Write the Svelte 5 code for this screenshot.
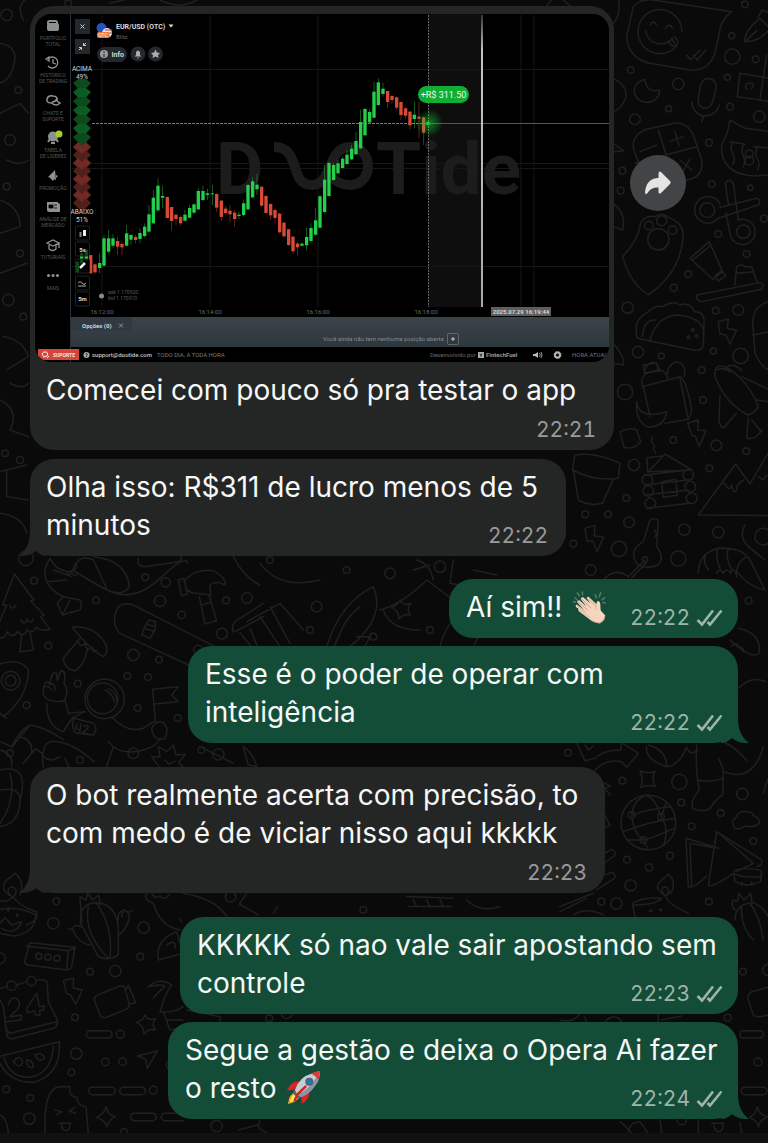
<script>
  const thread = [
    { lines: [['Olha isso: R$311 de lucro menos de 5'], ['minutos']], time: '22:22', width: 536, tail: true, gap: 9 },
    { lines: [['Aí sim!! ', 'clap']], time: '22:22', width: 289, mine: true, gap: 23 },
    { lines: [['Esse é o poder de operar com'], ['inteligência']], time: '22:22', width: 550, mine: true, tail: true, gap: 8 },
    { lines: [['O bot realmente acerta com precisão, to'], ['com medo é de viciar nisso aqui kkkkk']], time: '22:23', width: 575, tail: true, below: true, gap: 24 },
    { lines: [['KKKKK só nao vale sair apostando sem'], ['controle']], time: '22:23', width: 558, mine: true, gap: 24 },
    { lines: [['Segue a gestão e deixa o Opera Ai fazer'], ['o resto ', 'rocket']], time: '22:24', width: 570, mine: true, tail: true, gap: 8 }
  ];

  // candles: x, open/close top, open/close bottom, high, low, up
  const series = [
    {
      origin: 'translate(25 185) scale(.3333)',
      candles: [
        [157, 230, 262, 228, 265, 1], [170, 205, 235, 200, 240, 1], [184, 195, 225, 190, 230, 1], [197, 210, 265, 210, 266, 0],
        [210, 238, 262, 236, 266, 0], [224, 234, 249, 205, 265, 1], [237, 160, 242, 150, 245, 1], [251, 160, 200, 135, 205, 1],
        [264, 160, 182, 148, 190, 1], [278, 168, 185, 155, 210, 0], [291, 177, 187, 170, 210, 0], [305, 145, 182, 120, 185, 1],
        [318, 150, 164, 148, 180, 1], [332, 156, 165, 150, 175, 0], [345, 144, 162, 130, 175, 1], [359, 125, 153, 115, 158, 1],
        [372, 88, 140, 60, 142, 1], [385, 38, 115, 15, 118, 1], [399, 2, 76, -20, 80, 1], [413, 33, 38, 2, 70, 1],
        [427, 36, 99, 34, 100, 0], [440, 66, 108, 66, 138, 0], [453, 89, 102, 88, 120, 0], [467, 96, 115, 92, 122, 0],
        [480, 89, 107, 75, 110, 1], [494, 69, 98, 60, 100, 1], [507, 58, 83, 55, 88, 1], [520, 18, 73, 10, 75, 1],
        [534, 18, 45, 2, 48, 1], [547, 25, 30, 10, 45, 1]
      ]
    },
    {
      origin: 'translate(210 60) scale(.3333)',
      candles: [
        [7, 400, 403, 375, 435, 1], [20, 402, 443, 400, 455, 0], [34, 422, 471, 420, 482, 0], [47, 446, 459, 438, 465, 0],
        [60, 452, 463, 435, 487, 0], [74, 458, 477, 450, 500, 0], [87, 464, 468, 455, 477, 1], [101, 430, 465, 418, 468, 1],
        [114, 375, 448, 372, 450, 1], [128, 364, 412, 352, 415, 1], [141, 374, 388, 342, 405, 1], [155, 380, 437, 378, 440, 0],
        [168, 408, 459, 405, 462, 0], [182, 432, 466, 430, 480, 0], [195, 450, 474, 445, 490, 0], [209, 461, 517, 458, 520, 0],
        [222, 488, 529, 485, 532, 0], [236, 508, 555, 506, 558, 0], [249, 530, 574, 528, 582, 0], [263, 551, 562, 545, 585, 0],
        [276, 551, 557, 548, 560, 1], [290, 531, 556, 502, 570, 1], [303, 504, 543, 490, 548, 1], [317, 481, 524, 445, 528, 1],
        [330, 409, 503, 405, 506, 1], [344, 359, 456, 315, 460, 1], [357, 309, 408, 305, 410, 1], [371, 315, 360, 308, 363, 1],
        [384, 310, 340, 300, 343, 1], [398, 296, 324, 290, 326, 1], [411, 284, 312, 270, 315, 1], [425, 266, 298, 255, 300, 1],
        [438, 243, 283, 215, 285, 1], [452, 186, 265, 150, 268, 1], [465, 147, 226, 143, 228, 1], [479, 156, 187, 148, 190, 1],
        [492, 95, 173, 65, 175, 1], [505, 67, 135, 55, 138, 1], [519, 86, 102, 68, 110, 1], [533, 93, 126, 93, 145, 0],
        [546, 108, 120, 104, 130, 0], [560, 112, 143, 110, 150, 0], [573, 126, 165, 124, 180, 0], [587, 145, 167, 140, 178, 0],
        [600, 155, 196, 153, 208, 0], [613, 164, 177, 125, 205, 1], [627, 170, 176, 125, 235, 0], [641, 172, 218, 170, 255, 0],
        [654, 186, 195, 184, 198, 1]
      ]
    }
  ];

  const above = [...Array(7).keys()];
  const under = [...Array(8).keys()];

  const menu = [
    { y: 39, text: ['PORTFÓLIO', 'TOTAL'] },
    { y: 76, text: ['HISTÓRICO', 'DE TRADING'] },
    { y: 114, text: ['CHATS E', 'SUPORTE'] },
    { y: 151, text: ['TABELA', 'DE LÍDERES'] },
    { y: 189, text: ['PROMOÇÃO'] },
    { y: 220, text: ['ANÁLISE DE', 'MERCADO'] },
    { y: 258, text: ['TUTORIAIS'] },
    { y: 289, text: ['MAIS'] }
  ];

  // wallpaper doodles, each sheet has its own origin
  const doodles = [
    {
      at: 'translate(400 0) scale(.3333)',
      d: [
        'M700 20Q720-5 760 0L995 35Q968 58 962 80L945 160Q925 215 870 210L750 190Q685 175 680 110Z',
        'M846 95A66 66 0 1 0 830 138M737 92q8 38 45 40q25-2 36-18M750 75q10-18 20 0M797 85q12-18 20 0M805 122q10 22 25 16q8-12-5-28M815 115l10 18M860 165l12 15 28-30M880 165l12 15 25-30',
        'M735 238Q695 250 705 285Q725 320 765 300Q780 285 778 270Q740 280 735 238Z',
        'M902 255Q910 232 930 236Q950 240 948 265L938 305Q930 328 910 324Q892 318 895 295ZM875 305Q880 345 915 348Q950 345 958 315M910 350l-5 15',
        'M740 388L830 368Q865 370 880 405L905 480Q910 520 880 535L785 560Q745 560 730 525L700 445Q695 405 740 388ZM775 390l50 160M705 490L890 440M810 425l40-15M825 395l12 42M720 455l50-20M840 480l35 30M850 512l20-35',
        'M1110 395L1035 385L990 360Q985 400 965 435Q960 520 1060 528L1110 525M990 425l45 8M998 428q-10 16 0 32t0 34M1030 435q-8 16 0 32t0 34M1060 440l50 4M1072 444q-10 16 0 32t0 34',
        'M960 612A40 40 0 1 0 955 655L1075 615Q1085 600 1070 595L960 622M978 640L990 700A38 38 0 1 0 1015 660L1000 550Q988 532 976 550L986 616',
        'M722 670Q735 645 765 650Q785 635 810 655Q850 670 850 710Q840 820 745 885Q690 850 668 770Q715 720 722 670Z',
        'M870 775L928 725L968 815L938 838ZM945 828l20-15 12 15-22 15zM878 780l52-42',
        'M890 885L1080 848q15 5 5 20L905 905q-20-5-15-20M1005 855L1010 800q15-10 25 0l20 0L1072 848M1008 820l55-5',
        'M710 1000Q700 960 745 935Q765 915 790 920Q815 900 840 915Q870 905 885 935Q915 935 912 970L910 1035Q905 1055 880 1050L725 1018Q705 1015 710 1000ZM750 1020Q770 950 830 945Q900 950 910 990M728 1010Q730 960 765 960',
        'M955 965l30-8-3 28 28 6-20 42-12-28-18-3z',
        'M1035 125Q1030 95 1080 55L1110 85Q1080 125 1035 125L1070 92M1075 50l12-20 23 10',
        'M1110 235L1020 220L1012 290L1110 304M1100 165L1080 298M1040 270q-10-20 10-20t4 16',
        'M1110 905Q1060 915 1058 965L1065 1060Q1090 1110 1110 1110M1058 1005L1110 995',
        'M640 235Q690 260 675 300Q660 330 640 335M640 430l30 22-30 4M640 610Q680 640 668 690L640 680M640 1030Q675 1070 670 1095L640 1090M640 70Q665 40 655-5M735 1110q10-30 35-20l10 25M975 1110q10-20 30-12t20 15M490 0l20 18M440 18l15-20'
      ],
      dots: [[1035, 13, 10], [995, 107, 9], [997, 170, 23], [1067, 178, 10], [692, 210, 10], [835, 252, 17], [982, 232, 9], [990, 320, 10], [1078, 350, 17], [806, 326, 9], [705, 358, 16], [927, 428, 10], [667, 512, 10], [935, 552, 10], [1051, 563, 8], [662, 572, 10], [922, 630, 22], [1030, 695, 20], [1092, 656, 10], [955, 702, 10], [1040, 762, 10], [865, 822, 10], [821, 863, 10], [683, 923, 17], [947, 932, 10], [1015, 930, 16], [714, 1056, 17], [784, 1068, 9], [940, 1053, 9], [1022, 1068, 23], [775, 718, 32], [747, 677, 13], [785, 662, 15], [818, 690, 13], [878, 990, 4], [866, 1012, 4], [890, 1008, 4], [1048, 462, 12], [1048, 482, 13]]
    },
    {
      at: 'translate(565 360) scale(.3333)',
      d: [
        'M232 80Q225 50 245 40L290 30Q305 40 310 60M232 80L345 50Q365 60 380 150Q378 175 360 180L300 190M235 80l20 90M235 15l40-6 5 22-42 8zM305 45Q310 10 335 5Q365 10 358 50M345 55l25 125M215 125Q220 180 305 155Q300 200 250 202Q210 185 215 125',
        'M450 50Q445 10 480 20Q550 60 580 140Q570 160 550 165Q480 130 450 50ZM452 30Q480 20 495 35M465 105l-3 80q10 30 22 10l30-35M530 50L615 90M575 120l40 5M550 175l-5 60q30 5 45-25M560 180l30 35',
        'M165 215q30-15 50-5l12 35q-20 25-50 17zM262 232q-8 10 2 20t0 12l8 15M368 190l32-10-2 30 25 2-20 47-12-30-10-3z',
        'M30 285Q90 275 165 310L160 355Q90 365 22 330ZM25 330L40 420Q75 440 112 430L145 358',
        'M250 335L300 282L380 330ZM248 335l-2-42 45-5M238 345L370 330M240 375l130-15M240 405l130-15M245 445l130-15M290 365l42-7 5 48-42 6z',
        'M400 465L512 312L555 372L615 270M400 465L615 467M465 375q15-12 20 5q10 15 15-5q5 30 15 15q0-20 22-30M580 350l15 10 10-15',
        'M60 505l30-8-2 30 28 5-20 42-12-30-18-2z',
        'M255 480q20-10 25 5L275 560Q300 590 280 615Q240 630 215 610Q190 570 235 545ZM268 510l8 12-8 10M240 600L190 650M245 608l-45 45M115 660Q150 620 190 650',
        'M540 495Q520 530 550 560L600 600M400 640Q400 580 460 565Q530 560 555 600L600 690M430 630Q410 600 425 580M465 625Q450 590 458 567M500 630Q480 590 490 566M515 650Q510 610 545 590M515 635Q550 680 600 690M455 640q10-20 20 0q10-20 22 0q10-20 15 0',
        'M520 805Q590 820 583 880Q560 900 495 840M500 860q15-20 22 5q10-10 15 12M520 985Q560 945 600 965'
      ],
      dots: [[180, 96, 23], [410, 30, 10], [414, 120, 10], [325, 240, 10], [454, 256, 16], [544, 273, 10], [207, 315, 17], [433, 325, 10], [184, 414, 10], [61, 463, 10], [129, 463, 10], [192, 487, 16], [25, 551, 10], [162, 567, 23], [77, 630, 16], [358, 509, 17], [460, 517, 17], [340, 596, 23], [595, 530, 25], [551, 722, 10], [247, 360, 16], [250, 393, 16], [256, 430, 16], [370, 345, 16], [376, 380, 16], [380, 415, 16], [240, 598, 8]]
    },
    {
      at: 'translate(0 550) scale(.3333)',
      d: [
        'M43 72L8 165L20 165L-5 225M43 72L102 150L92 152L132 195L122 200L150 238M-10 262Q15 270 22 245Q38 268 52 245Q70 265 82 240Q95 255 108 232Q125 245 150 238M65 255L60 305L100 300L90 250M28 165q8 18 20 0M62 208q10 22 20 0q8 18 18 0',
        'M150 25Q125 60 140 95Q155 125 190 140L240 150M150 25Q165 60 205 65Q235 60 228 40M140 95L200 90M160 60L215 80M190 140L172 160L188 196L215 185M240 150Q248 160 240 180L212 188M210 150l-20 40',
        'M218 60Q235 10 280 30L322 120Q280 100 218 60M280 20Q380 30 388 110Q370 140 322 120Q400 160 480 85T562 40M415 25q-5 25 20 25l100-15q20-10 0-30M200 65q8 18 15 0q6 22 18 5',
        'M535 90L552 85L562 132L545 137ZM552 95Q580 55 640 62Q680 85 675 105Q650 90 630 105L632 135L575 128L562 120M598 140L615 222L650 212L628 138M603 165l30-8',
        'M355 170Q380 150 420 175L645 290M355 170Q330 220 360 250L565 345M435 230l12-20 20 5-2 25-15 25-25-10zM430 235l30 8M438 222l28 8',
        'M217 232Q290 225 320 290Q325 310 310 320Q270 300 217 232M240 265L190 325Q195 360 225 362Q250 350 262 300M235 275q5 20 20 5q5 28 22 12q0 18 12 8',
        'M-10 345Q60 320 85 360Q85 440 10 500L-10 480M0 490L20 505',
        'M148 450Q120 440 135 400Q145 390 150 405Q155 360 170 370L172 392L182 362Q200 360 192 400Q208 420 195 450Q175 460 148 450ZM140 460Q140 530 190 545L220 500M195 450L205 490L255 485M135 410q12-5 20 12M150 402q15-5 15 18',
        'M190 545Q210 500 255 485M190 568Q130 530 90 525Q60 540 35 590L0 575M90 525L35 592M0 600Q40 610 35 650M60 560Q100 570 95 610L70 640M130 650Q120 590 150 575Q210 570 282 635M95 610l12-14 20 15M195 625l12 28M325 575Q360 620 430 600Q470 590 480 565M335 500Q380 550 430 535L460 515M340 590l-20 60',
        'M222 505L280 520Q295 535 280 555L230 550Q210 535 222 505M315 420q22 10 28 35M325 415q30 15 25 50M232 522l-5 14 14 4M243 522l-4 26M252 528q18-5 10 8l-14 12 18 4',
        'M458 418L535 410L515 435L535 455L462 462M458 418L466 515M455 540q5-30 35-22q20 20 5 48q-30 10-40-26',
        'M455 620l25 0-5-30 25 15 20-20 8 30 28-2-20 25 15 15M455 620l22 30M495 630l12 12 18-8M730 590Q760 610 770 650L745 645ZM700 20Q730 80 780 105M700 245Q690 220 720 205L790 160M705 245L790 200M720 248l40 50M750 235l25 60'
      ],
      dots: [[78, 25, 22], [102, 92, 10], [288, 151, 10], [436, 82, 10], [480, 153, 17], [497, 97, 14], [545, 195, 11], [678, 151, 10], [741, 144, 16], [666, 251, 16], [145, 287, 10], [400, 315, 17], [477, 329, 10], [382, 378, 10], [444, 381, 10], [233, 401, 10], [80, 466, 10], [413, 474, 10], [533, 504, 10], [32, 392, 28], [32, 392, 16], [604, 600, 10], [655, 613, 17], [595, 300, 14], [308, 445, 46], [314, 447, 59]]
    },
    {
      at: 'translate(0 860) scale(.3333)',
      d: [
        'M38 110Q0 95 15 65L45 40Q75 60 60 105M38 110Q20 130 -5 120M38 110Q60 140 108 155Q120 180 80 195M-5 150Q50 135 108 165Q105 220 40 228L0 220M-5 195l20-22 20 22 25-8M5 205q40 25 60-20M30 105q-15-20 8-25q18 10 5 28',
        'M242 190Q235 130 290 128Q345 130 355 200L355 285Q325 305 295 290ZM245 185Q240 110 240 110l18 10 5-20 15 20 18-15 5 30M265 140Q250 220 325 295M290 130Q340 200 330 290M355 180Q350 155 375 150Q395 160 385 185Q370 220 355 225M242 200Q220 190 218 210Q235 250 270 255M370 150l-5 20M388 155l10-4M215 208l-8-2M545 185l-8-10',
        'M90 248L225 262L215 320Q212 330 200 330L85 315Q70 312 75 300ZM78 258L205 272L200 328M205 272l22-8',
        'M-5 388L20 380M50 375L80 365M110 360Q145 355 142 375L145 425L172 480Q175 500 160 505L35 537Q20 535 20 520L10 440L-5 410M15 470Q15 515 30 520L170 485',
        'M25 435Q30 410 48 415Q65 425 55 445L30 470L65 465L62 480L20 485M80 445L110 400L118 440L132 438L130 450L118 452L120 465L106 465L104 452L82 458Z',
        'M190 362l30-8 0 30 27 6-20 43-15-28-12-4z',
        'M300 402L360 378Q370 375 375 385L388 435Q388 445 378 448L320 472Q305 475 300 465L283 420Q282 408 300 402ZM375 392l10-16 22 52-20 5',
        'M435 465q10 20 32 10q-15 20 0 35q-20-5-35 12q0-25-22-35q20-5 25-22M318 740q5 25 28 30q-20 10-25 30q-8-22-32-28q25-10 29-32M412 588l60-15-30 52-5-28z',
        'M-5 590L178 545Q185 640 105 667Q30 670 0 610M12 592Q30 655 90 652Q155 640 160 558M40 605q20-25 28 0q-8 25-28 0M80 600q20 0 20 22q-20 5-20-22M105 585q25-10 28 10q-15 15-28-10',
        'M135 820Q130 680 180 680L210 680Q205 710 230 712Q235 740 258 740L265 820M165 750l20 5-15 10M225 742l-18 12 20 5M178 790l35 0M185 790q0 22 12 22q14 0 12-22M-5 765Q20 765 25 820',
        'M270 512l55 0a11 11 0 0 1 0 22l-55 0a11 11 0 0 1 0-22M277 682l58 0a11 11 0 0 1 0 22l-58 0a11 11 0 0 1 0-22M370 682l55 0a11 11 0 0 1 0 22l-55 0a11 11 0 0 1 0-22M403 760l55 0a11 11 0 0 1 0 22l-55 0a11 11 0 0 1 0-22M550 760l-55 0a11 11 0 0 0 0 22l55 0',
        'M440 100Q430 120 460 130Q480 200 540 210M550 100Q660 120 685 180M740 100L718 132L775 165M475 300Q465 240 530 215L550 280ZM500 255q30-20 25 10M445 380Q480 350 515 375Q500 390 480 455Q520 460 550 440M445 380Q490 370 495 380Q470 400 460 415M490 455L510 510L560 500M500 480l50 0M560 450l100 20 0 30M715 810l60-15M780 782q-15 25 20 35',
        'M455 100q10 20 25 8q12 15 28-4M820 160l12-20'
      ],
      dots: [[169, 124, 10], [160, 190, 17], [431, 203, 17], [0, 295, 16], [116, 289, 9], [144, 292, 9], [171, 295, 9], [35, 377, 14], [94, 363, 14], [421, 290, 10], [270, 335, 10], [346, 333, 17], [225, 472, 10], [361, 523, 12], [229, 581, 17], [316, 606, 11], [368, 605, 11], [214, 637, 10], [19, 688, 10], [91, 714, 10], [460, 691, 12], [88, 776, 17], [692, 110, 16], [650, 798, 17], [372, 816, 10], [25, 150, 3], [52, 165, 3], [515, 615, 16], [860, 460, 16], [808, 475, 10]]
    },
    {
      at: 'translate(560 740) scale(.3333)',
      d: [
        'M50 10L75 62L105 55Q130 30 182 30L185 8L235 40L200 82L185 65Q140 55 105 90M75 15l10 15 15-12M260 20Q255 60 320 80Q360 75 380 20M265 15Q320 30 320 80M380 25l12 14 20-5M410 15Q405 90 418 150Q390 180 398 205Q430 220 450 205Q465 180 488 165L490 95Q485 70 475 55M415 120Q450 130 488 115M470 0Q520 10 560 62M490 95Q580 130 610 20',
        'M240 92q22 12 45 2q-12 20 0 46q-20-8-42 2q8-25-3-50',
        'M183 250A82 82 0 1 0 347 245A82 82 0 1 0 183 250M215 225Q220 180 260 165M215 225Q220 280 250 300M215 225Q270 205 335 200M190 275Q270 245 345 235M250 300Q290 290 340 265M260 165Q290 180 303 230Q330 270 310 315M200 300l50 0M303 230q15-35 15-45M250 300l15 30',
        'M525 265Q510 245 530 230Q535 212 560 215Q580 215 580 228Q600 230 598 250Q580 265 555 258Q540 270 525 265Z',
        'M378 295L475 325M378 295L385 440Q395 450 440 408M390 310L395 440M390 310L455 322M470 275L605 360Q610 375 590 380M470 275L445 435Q455 445 520 400M480 282L580 370L530 395M522 395Q530 380 600 390Q610 400 600 410Q550 415 522 400L525 425Q560 445 602 425L605 400M545 425l0 10M575 425l0 10',
        'M317 468Q285 450 295 430L325 402Q350 425 335 455L317 468Q320 490 385 520M218 490Q250 470 305 475Q290 495 218 495L225 530M312 462q-15-20 5-22q15 8 5 22',
        'M135 340l20-12q15 8 8 20L125 375M135 405l20-8q15 8 8 18L110 450M0 500L100 460M0 515l80-40M40 525q40-25 90 0M135 130l15 8-15 8 15 18M135 225l15 32-15 5M525 510Q510 490 520 480l12 5 5-25 15 20 20-20 5 30M525 540Q525 490 580 488Q610 500 625 530M545 500Q540 560 580 600M570 490Q600 530 610 600M610 160Q620 120 630 110'
      ],
      dots: [[24, 38, 10], [187, 122, 10], [358, 126, 23], [364, 188, 10], [482, 219, 10], [547, 162, 17], [395, 259, 10], [580, 303, 10], [330, 347, 10], [201, 359, 10], [267, 382, 11], [212, 436, 17], [124, 485, 10], [169, 491, 17], [447, 485, 10], [215, 225, 10], [303, 230, 10], [250, 300, 10], [272, 512, 3], [302, 509, 3]]
    },
    {
      at: 'translate(560 960) scale(.3333)',
      d: [
        'M624 82L575 95Q560 105 565 120L580 165Q590 175 624 165M550 212l50 0a11 11 0 0 1 0 22l-50 0a11 11 0 0 1 0-22M555 382l55 0a11 11 0 0 1 0 22l-55 0a11 11 0 0 1 0-22M592 440q5 25 32 30q-25 10-28 30q-5-20-28-28q20-10 24-32M180 485q20 15 35 35M205 515q5-30 35-30L265 520M455 490l35 0M462 490q0 25 15 25q14-3 12-25M300 480l5 40M415 480l0 40M540 490l5 30M0 180Q40 190 60 160M75 170q0 15 12 20M295 160l0 25M305 180l60-12M135 185q30-30 50 0'
      ],
      dots: [[549, 35, 10], [625, 30, 17], [503, 173, 10], [594, 306, 12], [365, 480, 14]]
    },
    {
      at: 'translate(240 550) scale(.3333)',
      d: [
        'M60 40Q120 120 240 90M20 215L120 160L190 240M90 170l60 110M60 200l60 90M260 290Q300 160 400 110Q440 200 330 290M300 250q20-50 60-80M300 250l-20 45M350 260l40 0-15 28M420 180Q490 160 560 90L640 150M430 180q20 60 110 60M480 150q10 20 32 10q-15 20 0 35q-20-5-35 12q0-25-22-35q20-5 25-22M530 30q40 10 50 60M520 60l50-15M640 30l-10 70 60 10M640 200l90 30-30 60M700 60l70 15M600 290q20-80 70-100'
      ],
      dots: [[90, 30, 10], [230, 170, 16], [450, 70, 16], [320, 60, 10], [400, 260, 10], [570, 240, 10], [600, 50, 17], [210, 240, 10]]
    },
    {
      at: 'translate(0 0) scale(.3333)',
      d: [
        'M0 130Q60 140 40 200Q30 240 0 250M0 340l60-30 25 30M20 480Q60 500 85 480M0 600Q60 620 60 680L0 700M0 820l80-30M10 1010Q70 1020 85 1070L20 1110M30 1150q40 20 55 0M0 1200q60 30 30 90L85 1310M0 1415l80-20M20 1410l0 80 65 10M0 1540Q70 1550 80 1600M0 2310Q90 2290 60 2400Q60 2470 0 2480M0 2370Q60 2360 60 2400M30 2320Q50 2400 0 2470M70 60Q50 20 75 0M330 10l60-15M480 0q60 30 110 0',
        'M130 2270q20 20 50 0M600 2240l100 50M1220 2690l140 5M1225 2720l130 0M1240 2700l10 20M1280 2700l10 20M1320 2700l10 20M1400 2700q40 40 100 20'
      ],
      dots: [[20, 45, 17], [55, 270, 10], [30, 420, 16], [20, 560, 10], [60, 760, 10], [25, 900, 17], [70, 950, 10], [15, 1360, 10], [60, 1380, 10], [30, 2260, 10], [240, 2280, 10], [400, 2260, 16], [1090, 2730, 10], [205, 10, 10]]
    }
  ];
</script>

{#snippet ticks()}
  <svg class="ticks" viewBox="0 0 27 18" role="img" aria-label="Lida">
    <path d="M1.5 11L6 15.500L17 1.500M11.500 13L14 15.500L25.500 1.500" />
  </svg>
{/snippet}

{#snippet emoji(name)}
  {#if name === 'clap'}
    <svg class="emoji" viewBox="0 0 36 36" role="img" aria-label="👏🏻">
      <path d="M4 18.500Q3 16.500 5 16L12 21L5.500 14Q5 11.500 7.500 11.500L15 18L9 10.500Q9 8 11.500 8.500L19 15L15 9.500Q15 7.500 17 8L25 15.500L26 12.500Q28.500 11.500 29 15L29.500 22L34 27Q34.500 32 29 35Q24 36 19 32L7 23Q5.500 21 7 20.500Z" fill="#f5d5bd" />
      <path d="M5 16.500L14 24M6 13L16.500 22M9.500 9.500L19.500 19.500M15.500 9L25 18M19 32Q24 35 29 35Q34 32 34 27" fill="none" stroke="#c59b84" stroke-width=".9" />
      <path d="M25 15.500Q23 20 26 22M8 21.500L19 30" fill="none" stroke="#dfb49b" />
      <path d="M3 9L5 11M5.500 4L7.500 7M10.500 3L11 6M1.500 13L3.500 13.500M24 6L25 9M29.500 4L28 8M33.500 9L31 11M32 14L34 14.500" fill="none" stroke="#587a6e" stroke-width="1.600" stroke-linecap="round" />
    </svg>
  {:else}
    <svg class="emoji" viewBox="0 0 36 36" role="img" aria-label="🚀">
      <path d="M11 22Q3 24 2 35Q12 33 15 26Z" fill="#f8a91f" />
      <path d="M10 24Q6 26 4 33Q10 31 13 27Z" fill="#ffec57" />
      <path d="M14 12Q5 11 1 21L9 20ZM24 23Q24 31 16 35L16 27Z" fill="#d9252a" />
      <path d="M9 21Q13 7 28 3L35 1Q35 10 30 16Q24 25 15 28Z" fill="#c4ccd4" />
      <path d="M13 25Q26 18 34 3Q35 11 30 16Q24 25 15 28Z" fill="#8995a1" />
      <path d="M26 4Q30 1 35 1Q35 6 33 10Q31 6 26 4Z" fill="#e2383b" />
      <path d="M8 21L15 28L12 29L7 24Z" fill="#566370" />
      <path d="M20 17L12 25L9 31" fill="none" stroke="#c9252b" stroke-width="2.500" stroke-linecap="round" />
      <circle cx="24" cy="12" r="3.500" fill="#2475b5" stroke="#53606d" stroke-width="1.300" />
    </svg>
  {/if}
{/snippet}

{#snippet trade()}
  <svg class="photo" viewBox="35 14 574 348" role="img" aria-label="Gráfico EUR/USD (OTC)">
    <defs>
      <linearGradient id="expiry" x1="0" y1="0" x2="0" y2="1">
        <stop offset="0" stop-color="#333" />
        <stop offset=".12" stop-color="#c4c4c4" />
        <stop offset="1" stop-color="#aaa" />
      </linearGradient>
      <linearGradient id="panel" x1="0" y1="0" x2="0" y2="1">
        <stop offset="0" stop-color="#3a4449" />
        <stop offset="1" stop-color="#2e373d" />
      </linearGradient>
      <radialGradient id="glow">
        <stop offset="0" stop-color="#16c934" stop-opacity=".6" />
        <stop offset="1" stop-color="#16c934" stop-opacity="0" />
      </radialGradient>
    </defs>
    <rect x="35" y="14" width="574" height="348" />
    <rect x="428" y="14" width="54" height="293" fill="#0e0e0e" />
    <path d="M102 15V307M210 15V307M318 15V307M521 15V307M534 15V307M72 69.500H609M72 163.500H609M72 168.500H609M72 266.500H609" stroke="#151617" />

    <g class="watermark">
      <text x="216" y="194">D</text>
      <text x="376" y="194">Tide</text>
      <path d="M274 147C302 147 288 185 312 185C333 185 327 147 350 147C374 147 374 185 350 185C341 185 335 181 331 176" />
    </g>

    <path d="M92 123.500H428" stroke="#8a8420" stroke-dasharray="3 1" />
    <path d="M428 123.500H609" stroke="#5f5f14" />
    <path d="M428.500 15V307" stroke="#666" stroke-dasharray="2 1" />
    <rect x="481" y="15" width="2" height="292" fill="url(#expiry)" />

    {#each series as { origin, candles }}
      <g transform={origin}>
        {#each candles as [x, top, bottom, high, low, up]}
          <g fill={up ? '#25cf4b' : '#d84a35'}>
            <rect x={x - 1} y={high} width="2" height={low - high} opacity=".65" />
            <rect x={x - 5} y={top} width="10" height={bottom - top} />
          </g>
        {/each}
      </g>
    {/each}
    <circle cx="429" cy="123" r="14" fill="url(#glow)" />
    <rect x="418" y="86" width="51" height="17" rx="8.500" fill="#0fae35" />
    <text x="443.500" y="98" class="mid" fill="#eefaef" font-size="9">+R$ 311.50</text>

    <g class="mid" font-size="6.5" fill="#d5d5d5">
      {#each above as i}
        <path d="M73 {83 + i * 9}L78 {79 + i * 9}H86L91 {83 + i * 9}L82 {93 + i * 9}Z" fill={i % 2 ? '#0b5b22' : '#0e4a1e'} />
      {/each}
      {#each under as i}
        <path d="M73 {147 + i * 8}L78 {142 + i * 8}L82 {146 + i * 8}L86 {142 + i * 8}L91 {147 + i * 8}L82 {156 + i * 8}Z" fill={i % 2 ? '#51201c' : '#6f2a24'} />
      {/each}
      <text x="82" y="71">ACIMA</text>
      <text x="82" y="79">49%</text>
      <text x="82" y="214">ABAIXO</text>
      <text x="82" y="222">51%</text>
    </g>

    <path d="M70.500 14V362" stroke="#293137" />
    <g fill="#8e9192">
      <path d="M47 24V22.500Q47 20 49.500 20H55.500Q58 20 58 22.500V24H56V22H49V24ZM49 23H57Q59 23 59 25V29Q59 31 57 31H49Q47 31 47 29V25Q47 23 49 23Z" />
      <path d="M48 59A5.500 5.500 0 1 1 48 66M46 59L49 61L49 57ZM53 59V63L56 64" fill="none" stroke="#8e9192" stroke-width="1.300" />
      <path d="M52 103Q46 103 47 99Q48 95 53 96Q58 96 57 101L60 103L57 105Q53 105 52 103M52 102Q56 102 57 98" fill="none" stroke="#8e9192" stroke-width="1.500" />
      <circle cx="53" cy="136.500" r="5" />
      <path d="M48 142L50 139M58 142L56 139M51 143H55" stroke="#8e9192" stroke-width="2" />
      <circle cx="59" cy="134" r="3.500" fill="#a6cf22" />
      <path d="M48 177L55 170L56 180ZM50 178L54 179L53 181ZM56 175L58 176L56 178Z" />
      <path d="M47 202H58V203L60 204V212H49Q47 212 47 210Z" />
      <path d="M49 205H53V208H49ZM54 205H57M54 208H57" fill="#000" stroke="#000" stroke-width=".8" />
      <path d="M47 243L53 240L59 243L53 246ZM49 245V249Q53 252 56 249V245M59 243V248" fill="none" stroke="#8e9192" stroke-width="1.300" />
      <circle cx="48.500" cy="275.500" r="1.500" />
      <circle cx="53" cy="275.500" r="1.500" />
      <circle cx="57.500" cy="275.500" r="1.500" />
    </g>
    <g class="mid" font-size="5" fill="#56595a">
      {#each menu as { y, text }}
        {#each text as word, i}
          <text x="53" y={y + 1 + i * 6}>{word}</text>
        {/each}
      {/each}
    </g>

    <rect x="75" y="19" width="15" height="15" fill="#22282c" />
    <rect x="75" y="39" width="15" height="15" fill="#22282c" />
    <path d="M80.500 24.500L84.500 28.500M84.500 24.500L80.500 28.500M79 50L81.500 47.500M83.500 45.500L86 43M81.500 50V47.500H79M83.500 43V45.500H86" stroke="#c7cacb" fill="none" />
    <circle cx="101.500" cy="28" r="5" fill="#2254bd" />
    <circle cx="107" cy="33" r="5" fill="#e0dfe5" />
    <path d="M105 30H112M105 33H112M105 36H110" stroke="#b84450" />
    <rect x="97" y="32" width="12" height="6" rx="2" fill="#ee7b26" />
    <text x="103" y="37" class="mid" font-size="5" fill="#fff">OTC</text>
    <text x="116" y="29" font-size="7" font-weight="700" fill="#dadada">EUR/USD (OTC)</text>
    <path d="M168.500 24.500H173.500L171 27.500Z" fill="#ddd" />
    <text x="116" y="39" font-size="6" fill="#666">Blitz</text>
    <rect x="97" y="47" width="30" height="15" rx="7.500" fill="#22282c" />
    <circle cx="104" cy="54" r="4" fill="#9a9ea0" />
    <path d="M104 51.500V53M104 54V57" stroke="#22282c" stroke-width="1.200" />
    <text x="111.500" y="57" font-size="7" font-weight="700" fill="#d3d5d6">Info</text>
    <circle cx="138" cy="54" r="7.500" fill="#22282c" />
    <path d="M134.500 56.500L136 55V52Q138 49 140 52V55L141.500 56.500ZM137 57.500H139L138 59Z" fill="#a9acad" />
    <circle cx="155.500" cy="54" r="7.500" fill="#22282c" />
    <path d="M155.500 49.500L157 52.500L160 53L158 55.200L158.500 58L155.500 56.500L152.500 58L153 55.200L151 53L154 52.500Z" fill="#a9acad" />

    <g fill="#000" fill-opacity=".65" stroke="#202224">
      <rect x="75.500" y="226" width="14" height="14" rx="1" />
      <rect x="75.500" y="242" width="14" height="14" rx="1" />
      <rect x="75.500" y="259" width="14" height="14" rx="1" />
      <rect x="75.500" y="276" width="14" height="14" rx="1" />
      <rect x="75.500" y="292" width="14" height="14" rx="1" />
    </g>
    <path d="M80.500 232V237" stroke="#888" stroke-width="2" />
    <path d="M84.500 230V236" stroke="#eee" stroke-width="3" />
    <path d="M80 268L85 263" stroke="#eee" stroke-width="2.500" />
    <path d="M78 283Q80 280 82 283T86 283M78 286H86" stroke="#aaa" fill="none" />
    <g class="mid" font-size="6" font-weight="700" fill="#ddd">
      <text x="82.500" y="252">5s</text>
      <text x="82.500" y="301">5m</text>
    </g>
    <circle cx="101.500" cy="296" r="2.500" fill="#8a8a8a" />
    <g font-size="5" fill="#56595a">
      <text x="108" y="294">ask 1.170920</text>
      <text x="108" y="300">bid 1.170910</text>
    </g>
    <g class="mid" font-size="6" fill="#6b6d6e">
      <text x="102" y="314">16:12:00</text>
      <text x="210" y="314">16:14:00</text>
      <text x="318" y="314">16:16:00</text>
      <text x="426" y="314">16:18:00</text>
    </g>
    <rect x="491" y="307" width="60" height="9" fill="#5e5e5e" />
    <text x="521" y="314" class="mid" font-size="6" font-weight="700" fill="#d5d5d5">2025.07.29 16:19:44</text>

    <rect x="71" y="317" width="538" height="30" fill="url(#panel)" />
    <rect x="71" y="317" width="61" height="14" fill="#303a40" />
    <text x="82" y="328" font-size="6" font-weight="700" fill="#d2d6d8">Opções (0)</text>
    <path d="M119 323.500L123 327.500M123 323.500L119 327.500" stroke="#8b9296" />
    <text x="323" y="341" font-size="6" fill="#838b8f">Você ainda não tem nenhuma posição aberta</text>
    <rect x="447.500" y="333.500" width="11" height="11" rx="1" fill="none" stroke="#5f686d" />
    <path d="M451 339H455M453 337V341" stroke="#c4c8ca" />
    <rect x="38" y="349" width="41" height="11" fill="#d64538" />
    <path d="M43 356Q41 352 45 352Q49 352 47 356L43 357M47 358L49 356" fill="none" stroke="#fff" />
    <text x="53" y="357" font-size="5" font-weight="700" fill="#fae3e0">SUPORTE</text>
    <circle cx="86.500" cy="355" r="3" fill="#aaa" />
    <path d="M85.500 354Q86.500 352.500 87.500 354L86.500 355.500V357" fill="none" stroke="#111" stroke-width=".8" />
    <text x="92" y="357" font-size="6" font-weight="500" fill="#c4c4c4">support@duotide.com</text>
    <text x="157" y="357" font-size="6" fill="#7b7b7b">TODO DIA, A TODA HORA</text>
    <text x="430" y="357" font-size="6" fill="#6b6b6b">Desenvolvido por</text>
    <path d="M478 352H484V358H478Z" fill="#aaa" />
    <path d="M479.500 354H480.500V356.500M482.500 354H481.500V356.500" fill="none" stroke="#222" stroke-width=".7" />
    <text x="486" y="357" font-size="6" font-weight="700" fill="#999">FintechFuel</text>
    <path d="M533 354H535L538 352V358L535 356H533Z" fill="#bbb" />
    <path d="M539.500 353Q541 355 539.500 357M541 352Q543 355 541 358" fill="none" stroke="#bbb" stroke-width=".8" />
    <circle cx="557.500" cy="355" r="2.500" fill="none" stroke="#b5b5b5" stroke-width="2" />
    <circle cx="557.500" cy="355" r="3.500" fill="none" stroke="#b5b5b5" stroke-dasharray="1.400 1.350" />
    <text x="572" y="357" font-size="6" fill="#777">HORA ATUAL</text>
  </svg>
{/snippet}

<main class="chat">
  <svg class="wallpaper" viewBox="0 0 768 1143" preserveAspectRatio="xMidYMin slice" aria-hidden="true">
    {#each doodles as { at, d, dots }}
      <g transform={at}>
        {#each d as path}
          <path d={path} />
        {/each}
        {#each dots as [cx, cy, r]}
          <circle {cx} {cy} {r} />
        {/each}
      </g>
    {/each}
  </svg>

  <div class="row">
    <article class="bubble media">
      {@render trade()}
      <div class="body below">
        <p class="text">Comecei com pouco só pra testar o app</p>
        <time class="meta">22:21</time>
      </div>
    </article>
    <button class="forward" aria-label="Encaminhar">
      <svg viewBox="0 0 28 28">
        <path d="M14.500 4.500Q15 1.500 17 3L26 12Q27.500 13.500 26 15L17 24Q15 25.500 14.500 23V18.500Q7 18 3.500 24Q1.500 26.500 1 23.500Q2 9.500 14.500 9Z" fill="#e4e4e5" />
      </svg>
    </button>
  </div>

  {#each thread as m}
    <div class="row" class:mine={m.mine} style:margin-top="{m.gap}px">
      <article class="bubble" style:width="{m.width}px">
        <div class="body" class:below={m.below}>
          <p class="text">
            {#each m.lines as [words, icon]}
              <span class="line">{words}{#if icon}{@render emoji(icon)}{/if}</span>
            {/each}
          </p>
          <span class="meta">
            <time>{m.time}</time>
            {#if m.mine}{@render ticks()}{/if}
          </span>
        </div>
        {#if m.tail}
          <svg class="tail" viewBox="0 0 28 26" aria-hidden="true">
            <path d="M0 0H17C17 12 20 20 28 26C20 26.500 14 24 11 21C8 24 4 26 0 26Z" />
          </svg>
        {/if}
      </article>
    </div>
  {/each}
</main>
<div class="bar"></div>

<style>
  :global(body) {
    background: #0a0a0a;
  }
  .chat {
    position: relative;
    overflow: hidden;
    padding: 6px 30px 14px;
    background: #0a0a0a;
    color: #f6f7f7;
    font-family: Inter, 'Liberation Sans', sans-serif;
    font-size: 28px;
  }
  .wallpaper {
    position: absolute;
    inset: 0;
    width: 100%;
    height: 100%;
    fill: none;
    stroke: #202020;
    stroke-width: 4.5;
    stroke-linejoin: round;
    stroke-linecap: round;
  }
  .row {
    position: relative;
    display: flex;
    align-items: center;
    gap: 16px;
  }
  .row.mine {
    justify-content: flex-end;
  }
  .bubble {
    --fill: #242626;
    position: relative;
    box-sizing: border-box;
    max-width: 100%;
    border-radius: 24px;
    background: var(--fill);
  }
  .mine .bubble {
    --fill: #144d37;
  }
  .media {
    flex: 0 1 584px;
    padding-top: 8px;
  }
  .photo {
    display: block;
    width: calc(100% - 10px);
    margin: 0 auto;
    border-radius: 16px;
    font-family: Roboto, sans-serif;
  }
  .photo .mid {
    text-anchor: middle;
  }
  .watermark {
    font-size: 73px;
    font-weight: 700;
    fill: #1c1c1d;
  }
  .watermark path {
    fill: none;
    stroke: #1c1c1d;
    stroke-width: 10;
  }
  .body {
    display: grid;
    padding: 9px 18px 9px 16px;
  }
  .mine .body {
    padding: 9px 15px 9px 17px;
  }
  .text,
  .meta {
    grid-area: 1 / 1;
  }
  .text {
    margin: 0 0 3px;
    line-height: 38px;
  }
  .below .text {
    padding-bottom: 29px;
  }
  .line {
    display: block;
    height: 38px;
    white-space: nowrap;
  }
  .meta {
    display: flex;
    align-items: center;
    align-self: end;
    justify-self: end;
    gap: 6px;
    color: #999a9a;
    font-size: 21px;
    font-variant-numeric: tabular-nums;
    line-height: 22px;
  }
  .mine .meta {
    color: #9db5ab;
  }
  .ticks {
    width: 27px;
    height: 18px;
    fill: none;
    stroke: currentColor;
    stroke-width: 2.6;
  }
  .emoji {
    width: 35px;
    height: 35px;
    margin-left: 2px;
    vertical-align: -7px;
  }
  .tail {
    position: absolute;
    bottom: 0;
    left: -11px;
    width: 28px;
    height: 26px;
    fill: var(--fill);
    transform: scaleX(-1);
  }
  .mine .tail {
    left: auto;
    right: -11px;
    transform: none;
  }
  .forward {
    width: 56px;
    height: 56px;
    margin: 0 0 90px;
    padding: 14px;
    border: 0;
    border-radius: 50%;
    background: #434446;
  }
  .forward svg {
    display: block;
    width: 28px;
    height: 28px;
  }
  .bar {
    height: 10px;
    background: #111;
  }
</style>
